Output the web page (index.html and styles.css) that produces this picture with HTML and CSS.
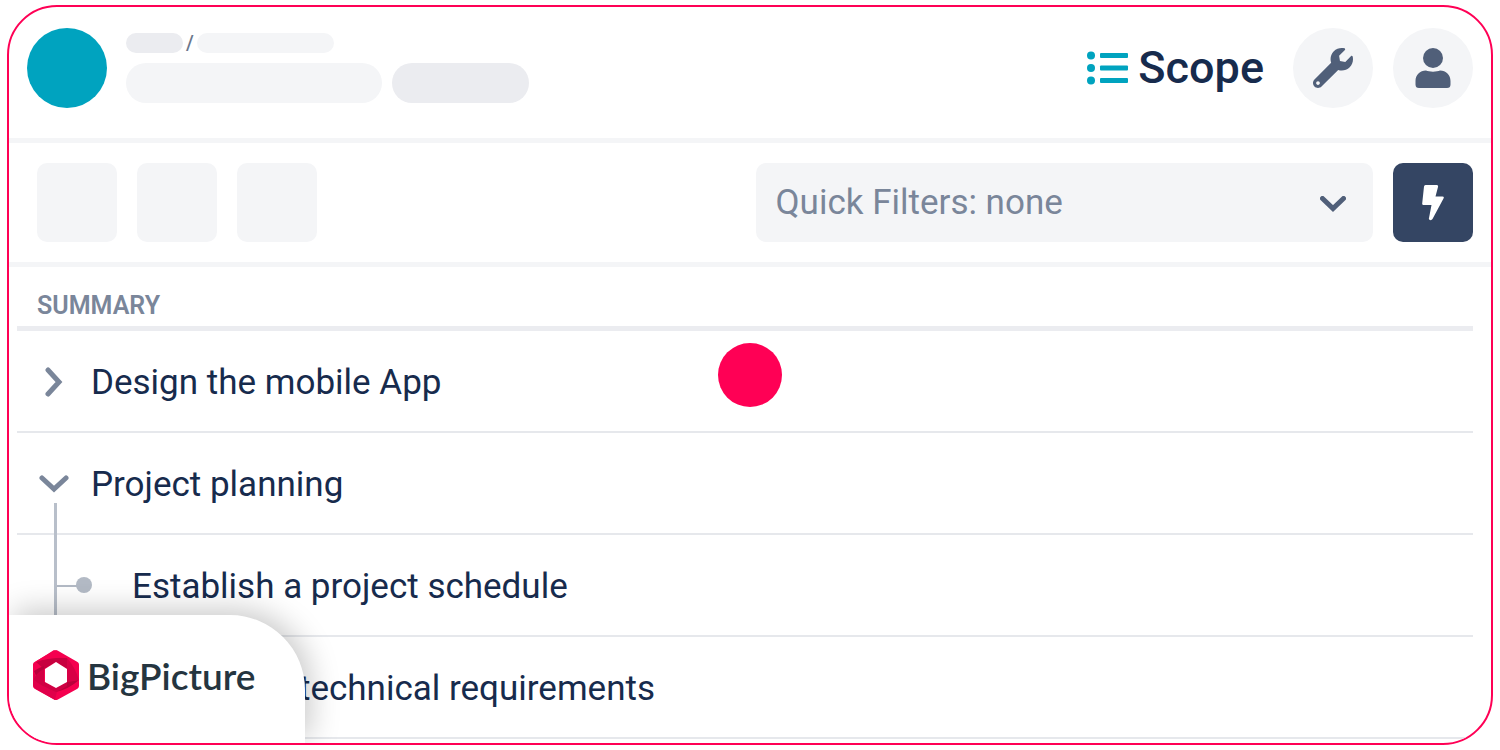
FILE: index.html
```
<!DOCTYPE html>
<html lang="en">
  <head>
    <meta charset="UTF-8" />
    <meta name="viewport" content="width=device-width, initial-scale=1.0" />
    <title>BigPicture - Scope</title>
    <link rel="stylesheet" href="styles.css">
  </head>
  <body>
    <div class="frame">
      <header class="header">
        <div class="avatar"></div>
        <div class="placeholders">
          <div class="crumbs">
            <span class="pill pill-small dark"></span>
            <span class="slash">/</span>
            <span class="pill pill-medium"></span>
          </div>
          <div class="titles">
            <span class="pill pill-large"></span>
            <span class="pill pill-medium dark"></span>
          </div>
        </div>

        <h1 class="module">
          <svg width="42" height="34" viewBox="0 0 42 34" fill="#00a3bf" aria-hidden="true">
            <circle cx="4" cy="4.500" r="4" />
            <circle cx="4" cy="17" r="4" />
            <circle cx="4" cy="29.500" r="4" />
            <rect x="13" y="2" width="28" height="5" rx="1" />
            <rect x="13" y="14.500" width="28" height="5" rx="1" />
            <rect x="13" y="27" width="28" height="5" rx="1" />
          </svg>
          Scope
        </h1>

        <div class="actions">
          <button class="round-btn" aria-label="Settings">
            <svg width="40" height="40" viewBox="0 0 512 512" fill="#505f79">
              <path d="M507.73 109.1c-2.24-9.03-13.54-12.09-20.12-5.51l-74.36 74.36-67.88-11.31-11.31-67.88 74.36-74.36c6.62-6.62 3.43-17.9-5.66-20.16-47.38-11.74-99.55.91-136.58 37.93-39.64 39.64-50.55 97.1-34.05 147.2L18.74 402.76c-24.99 24.99-24.99 65.51 0 90.5 24.99 24.99 65.51 24.99 90.5 0l213.21-213.21c50.12 16.71 107.47 5.68 147.37-34.22 37.07-37.07 49.7-89.32 37.91-136.73zM64 472c-13.25 0-24-10.75-24-24 0-13.26 10.75-24 24-24s24 10.74 24 24c0 13.25-10.75 24-24 24z" />
            </svg>
          </button>
          <button class="round-btn" aria-label="Profile">
            <svg width="36" height="40" viewBox="0 0 36 40" fill="#505f79">
              <circle cx="18" cy="10" r="10" />
              <path d="M11 22.500C14 24 22 24 25 22.500C31 22.500 35.500 27 35.500 33V36.500Q35.500 40 32 40H4Q.5 40 .5 36.500V33C.5 27 5 22.500 11 22.500Z" />
            </svg>
          </button>
        </div>
      </header>

      <div class="toolbar">
        <button class="tool" aria-label="Tool 1"></button>
        <button class="tool" aria-label="Tool 2"></button>
        <button class="tool" aria-label="Tool 3"></button>
        <div class="filter">
          <select aria-label="Quick Filters">
            <option>Quick Filters: none</option>
          </select>
          <svg class="filter-arrow" width="26" height="16" viewBox="0 0 26 16" fill="none" stroke="#505f79" stroke-width="5" stroke-linecap="round" aria-hidden="true">
            <path d="M2.500 2.500L13 12.500L23.500 2.500" />
          </svg>
        </div>
        <button class="tool bolt" aria-label="Quick actions">
          <svg width="22" height="36" viewBox="0 0 22 36" fill="#fff">
            <path d="M3.500 0H14.500Q16.500 0 16 2L13.500 11.500H20.500Q22.500 11.500 21.500 13.500L10.500 34Q9.500 35.500 8 35Q6.500 34.500 7 33L9.500 20H1.500Q0 20 .2 18.500L2 1.500Q2.200 0 3.500 0Z" />
          </svg>
        </button>
      </div>

      <table class="tasks">
        <thead>
          <tr>
            <th>SUMMARY</th>
          </tr>
        </thead>
        <tbody>
          <tr>
            <td>
              <div class="task">
                <button class="toggle" aria-label="Expand">
                  <svg width="18" height="30" viewBox="0 0 18 30" fill="none" stroke="#7a869a" stroke-width="5" stroke-linecap="round">
                    <path d="M3 3L14 15L3 27" />
                  </svg>
                </button>
                Design the mobile App
              </div>
            </td>
          </tr>
          <tr>
            <td>
              <div class="task parent">
                <button class="toggle" aria-label="Collapse">
                  <svg width="30" height="18" viewBox="0 0 30 18" fill="none" stroke="#7a869a" stroke-width="5" stroke-linecap="round">
                    <path d="M3 3L15 14L27 3" />
                  </svg>
                </button>
                Project planning
              </div>
            </td>
          </tr>
          <tr>
            <td>
              <div class="task child">
                <span class="branch"></span>
                Establish a project schedule
              </div>
            </td>
          </tr>
          <tr>
            <td><div class="task behind-logo">technical requirements</div></td>
          </tr>
        </tbody>
      </table>

      <!-- logo in the corner -->
      <div class="brand">
        <svg width="46" height="52" viewBox="0 0 46 52" aria-hidden="true">
          <path fill="#f5004f" stroke="#f5004f" stroke-width="6" stroke-linejoin="round" d="M23 4L43 15.500V37L23 48L3 37V15.500Z" />
          <path fill="#c7003f" d="M11 20L3 13Q18 7 34 9V20L23 13Z" />
          <path fill="#f5004f" d="M2 13L21 1L34 9Q20 8 2 13Z" />
          <path fill="#d80046" d="M34 9Q42 18 46 31L34 33V20Z" />
          <path fill="#ba003b" d="M46 31Q36 40 23 43L13 38L23 39L34 33Z" />
          <path fill="#cf0043" d="M34 33V37Q28 41 23 43L11 37V33L23 39Z" />
          <path fill="#b9003b" d="M11 20V37Q4 30 1 22Q5 19 11 17Z" />
          <path fill="#e0004a" d="M1 24Q4 31 12 38L24 43L22 51L3 40Q0 38 0 35Z" />
          <path fill="#d00043" d="M11 20V33L23 39V43L10 37Q2 33 1 30Q4 23 11 20Z" />
          <path fill="#fff" d="M23 13L34 20V33L23 39L12 33V20Z" />
        </svg>
        BigPicture
      </div>

      <!-- cursor -->
      <div class="cursor"></div>
    </div>
  </body>
</html>
```
FILE: styles.css
```
* {
  margin: 0;
  padding: 0;
  box-sizing: border-box;
}

body {
  height: 100vh;
  padding: 5px 7px;
  background: #fff;
  color: #172b4d;
  font-family: Roboto, Arial, sans-serif;
  overflow: hidden;
}

button {
  border: none;
  cursor: pointer;
}

.frame {
  position: relative;
  height: 100%;
  border: 2px solid #ff0055;
  border-radius: 50px;
  overflow: hidden;
}

/* header */
.header {
  display: flex;
  align-items: center;
  gap: 19px;
  padding: 21px 18px 30px;
  border-bottom: 5px solid #f4f5f7;
}

.avatar {
  width: 80px;
  height: 80px;
  border-radius: 50%;
  background: #00a3bf;
}

.placeholders {
  display: flex;
  flex-direction: column;
  gap: 10px;
}

.crumbs {
  display: flex;
  align-items: center;
  gap: 3px;
  height: 20px;
}

.titles {
  display: flex;
  gap: 10px;
}

.pill {
  height: 40px;
  border-radius: 20px;
  background: #f4f5f7;
}

.crumbs .pill {
  height: 20px;
}

.pill-small {
  width: 57px;
}

.pill-medium {
  width: 137px;
}

.pill-large {
  width: 256px;
}

.dark {
  background: #ebecf0;
}

.slash {
  color: #6b778c;
  font-size: 20px;
  font-weight: 500;
  line-height: 20px;
}

.module {
  display: flex;
  align-items: center;
  gap: 9px;
  margin-left: auto;
  font-size: 45px;
  font-weight: 500;
  line-height: 54px;
}

.actions {
  display: flex;
  gap: 20px;
  margin-left: 10px;
}

.round-btn {
  display: flex;
  align-items: center;
  justify-content: center;
  width: 80px;
  height: 80px;
  border-radius: 50%;
  background: #f4f5f7;
}

/* toolbar */
.toolbar {
  display: flex;
  gap: 20px;
  padding: 20px 18px 20px 28px;
  border-bottom: 5px solid #f4f5f7;
}

.tool {
  display: flex;
  align-items: center;
  justify-content: center;
  width: 80px;
  height: 79px;
  border-radius: 10px;
  background: #f4f5f7;
}

.filter {
  position: relative;
  width: 43%;
  margin-left: auto;
}

.filter select {
  width: 100%;
  height: 100%;
  padding: 0 60px 0 20px;
  border: none;
  border-radius: 10px;
  background: #f4f5f7;
  color: #7a869a;
  font-family: inherit;
  font-size: 35px;
  appearance: none;
}

.filter-arrow {
  position: absolute;
  top: 33px;
  right: 27px;
  pointer-events: none;
}

.bolt {
  background: #344563;
}

/* tasks */
.tasks {
  width: calc(100% - 26px);
  margin-left: 8px;
  border-collapse: separate;
  border-spacing: 0;
}

.tasks th {
  height: 64px;
  padding: 18px 20px 0;
  border-bottom: 5px solid #ebecf0;
  color: #7a869a;
  font-size: 25px;
  font-weight: 600;
  line-height: 30px;
  text-align: left;
}

.tasks td {
  border-bottom: 2px solid #e6e8ec;
}

.task {
  position: relative;
  display: flex;
  align-items: center;
  gap: 20px;
  height: 100px;
  padding: 2px 0 0 19px;
  font-size: 35px;
}

.child {
  padding-left: 115px;
}

.behind-logo {
  padding-left: 282px;
}

.toggle {
  display: flex;
  align-items: center;
  justify-content: center;
  width: 35px;
  height: 40px;
  background: none;
}

/* tree lines */
.parent::after,
.child::before {
  content: "";
  position: absolute;
  left: 37px;
  top: 0;
  width: 3px;
  height: 102px;
  background: #b8bfca;
}

.parent::after {
  top: 70px;
  height: 32px;
}

.branch {
  position: absolute;
  left: 40px;
  top: 50px;
  width: 24px;
  height: 2px;
  background: #b3bac5;
}

.child::after {
  content: "";
  position: absolute;
  left: 59px;
  top: 42px;
  width: 16px;
  height: 16px;
  border-radius: 50%;
  background: #b3bac5;
}

/* logo */
.brand {
  position: absolute;
  left: 0;
  bottom: 0;
  display: flex;
  align-items: center;
  gap: 8px;
  width: 296px;
  height: 128px;
  padding: 0 0 8px 24px;
  border-top-right-radius: 75px;
  background: #fff;
  box-shadow: 5px -5px 30px rgba(0, 0, 0, 0.22);
  color: #253540;
  font-family: Lato, sans-serif;
  font-size: 37px;
  font-weight: 600;
}

.cursor {
  position: absolute;
  top: 50%;
  left: 50%;
  width: 64px;
  height: 64px;
  border-radius: 50%;
  background: #ff0055;
  transform: translate(-50%, -50%);
}
```
